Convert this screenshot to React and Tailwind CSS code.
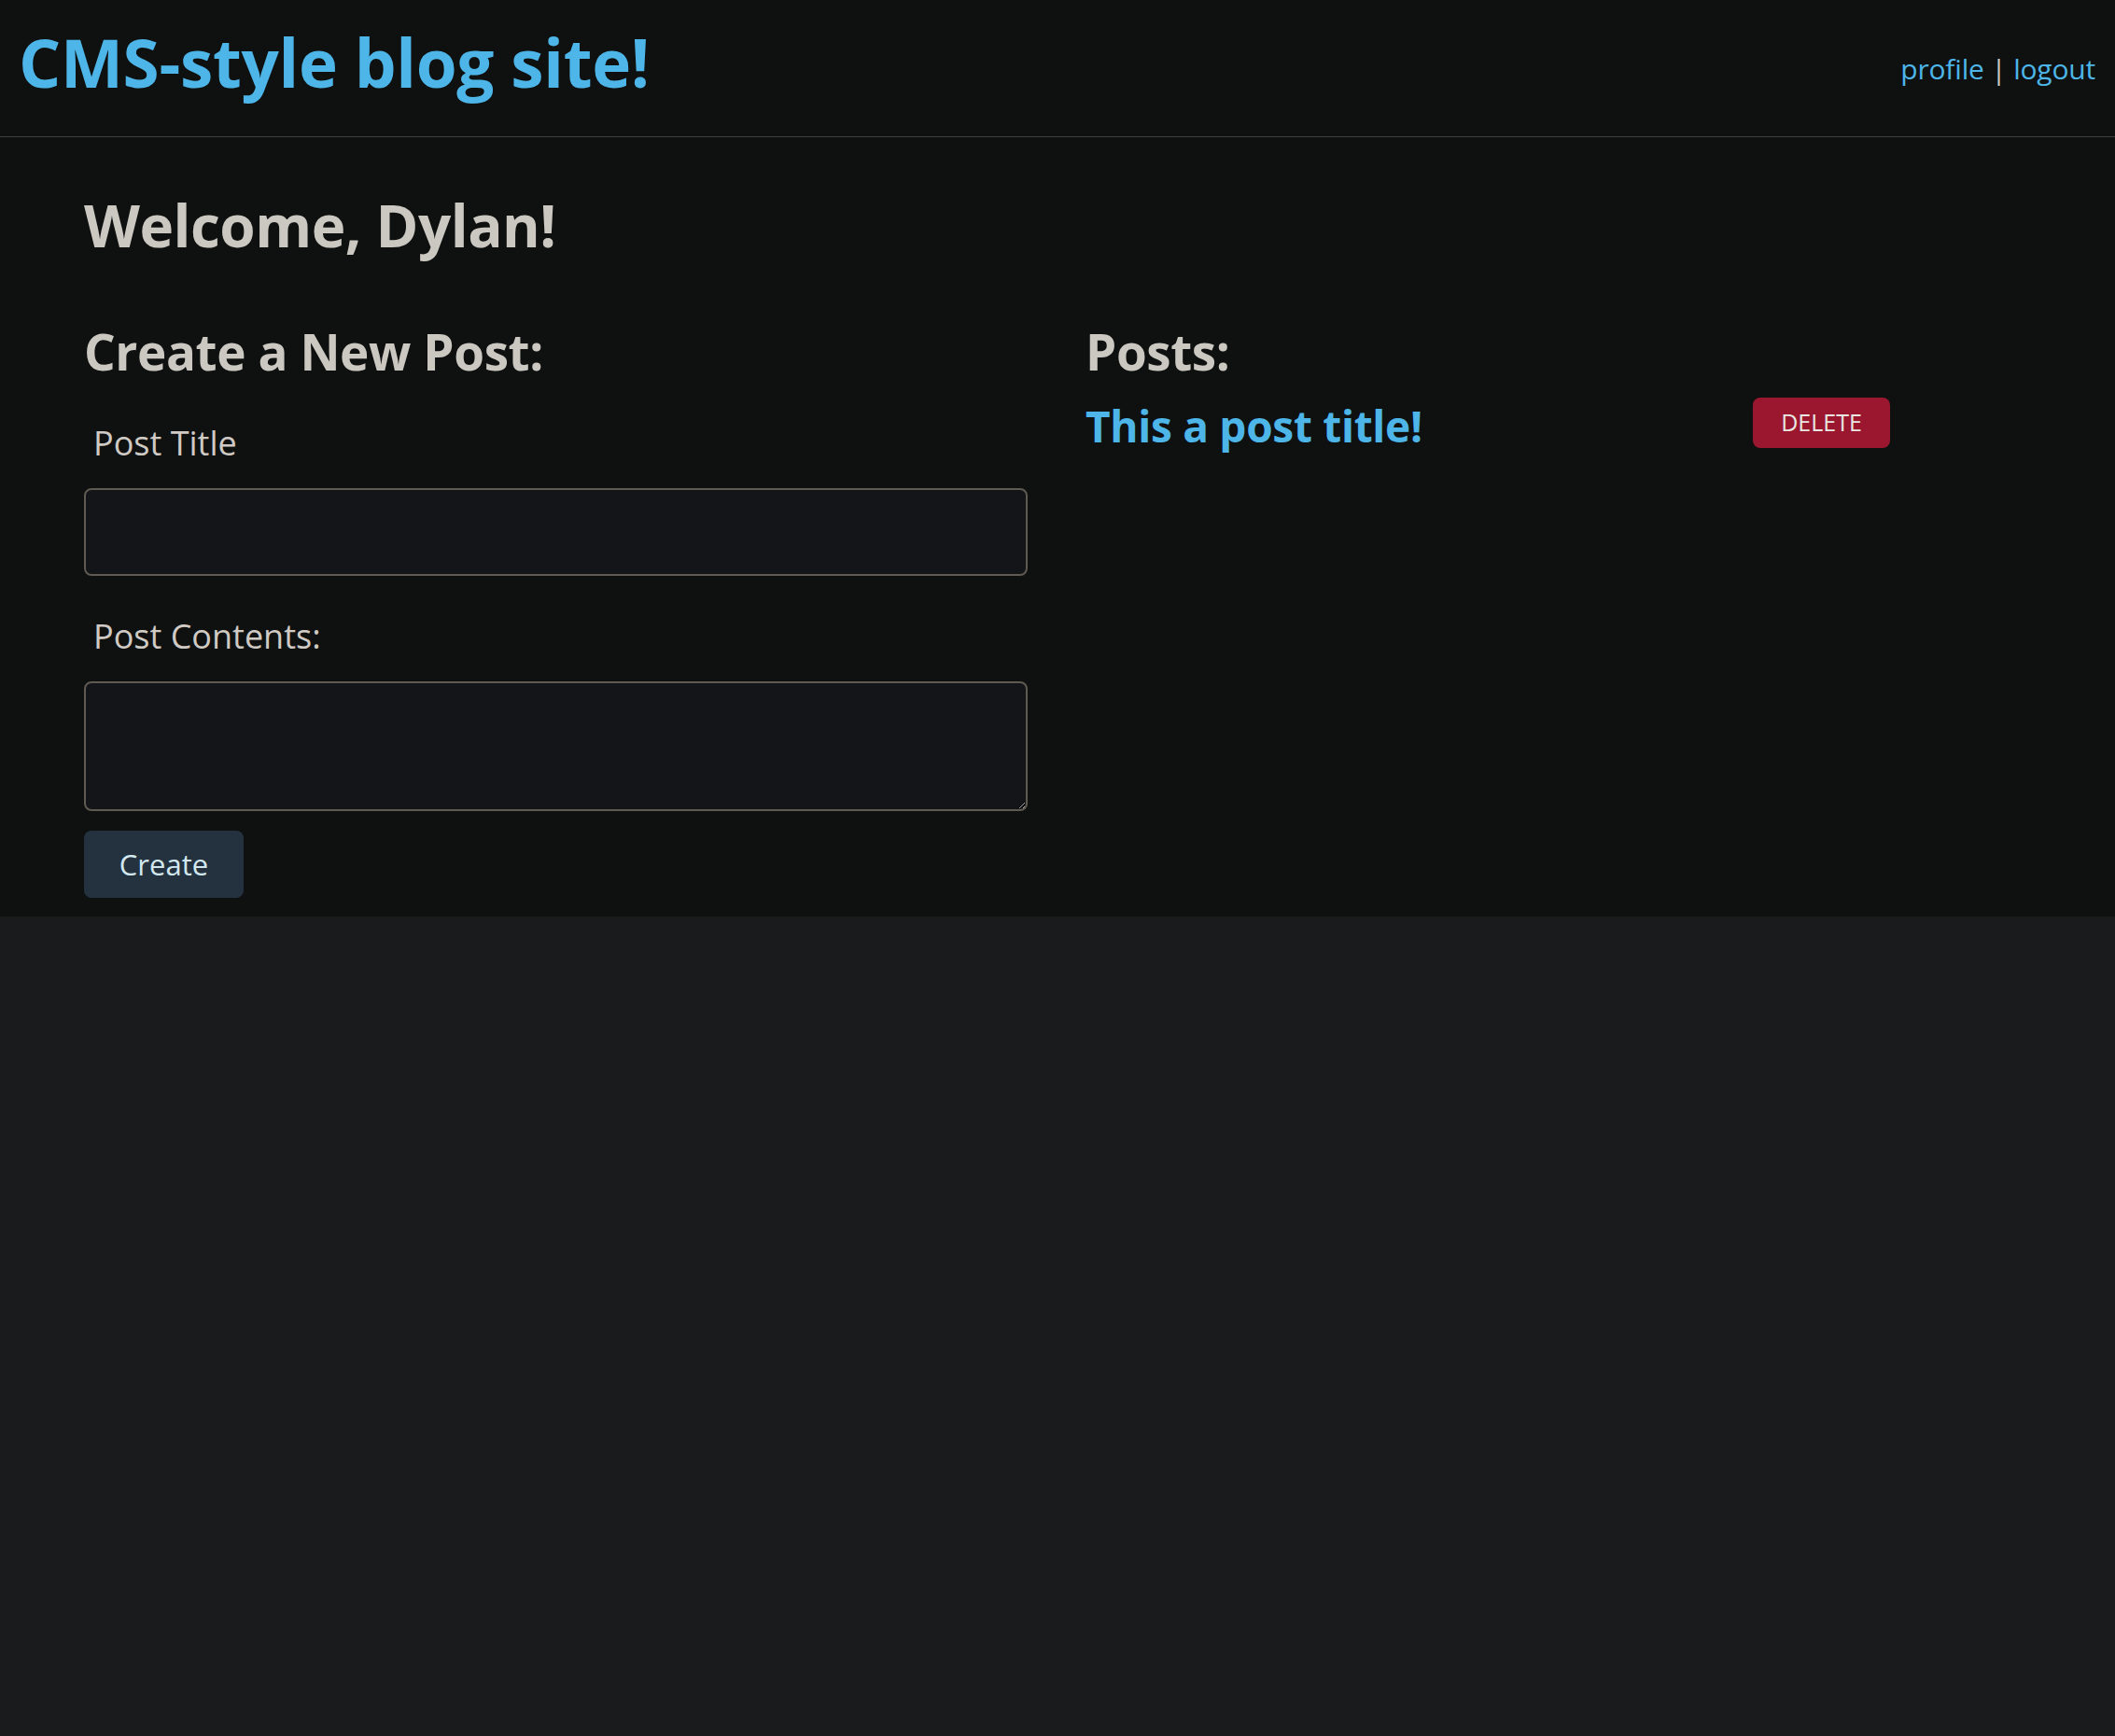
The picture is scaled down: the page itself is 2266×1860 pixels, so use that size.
const posts = [{ id: 1, title: 'This a post title!' }];

export default function App() {
  return (
    <div className="min-h-[1860px] bg-[#1a1b1d] font-['Open_Sans','Noto_Sans',sans-serif]">
      <header className="h-[147px] flex justify-between items-start border-b border-[#3c3f42] bg-[#0f1111]">
        <h1 className="pl-[20px] pt-[31px] text-[71px] leading-none font-bold tracking-[-0.3px] text-[#4db5e8]">
          <a href="#">CMS-style blog site!</a>
        </h1>
        <nav className="pr-[21px] pt-[59px] text-[30px] leading-none tracking-[-0.2px] text-[#4db5e8]">
          <a href="#">profile</a>
          <span className="text-[#cbc7c1]"> | </span>
          <a href="#">logout</a>
        </nav>
      </header>

      <main className="bg-[#0f1111] pl-[90px] pt-[63px] pb-[20px]">
        <h2 className="text-[62px] leading-none font-bold tracking-[-0.5px] text-[#cbc7c1]">Welcome, Dylan!</h2>

        <div className="mt-[78px] grid grid-cols-[1011px_862px] gap-x-[62px]">
          <form className="flex flex-col" onSubmit={(e) => e.preventDefault()}>
            <h3 className="text-[53px] leading-none font-bold tracking-[-0.4px] text-[#cbc7c1]">Create a New Post:</h3>
            <label className="mt-[54px] pl-[10px] text-[36px] leading-none text-[#cfcac4]">Post Title</label>
            <input
              type="text"
              className="mt-[30px] h-[94px] w-full rounded-lg border-2 border-[#5f5a52] bg-[#141518] px-4 text-[32px] text-[#cfcac4] outline-none"
            />
            <label className="mt-[47px] pl-[10px] text-[36px] leading-none text-[#cfcac4]">Post Contents:</label>
            <textarea className="mt-[30px] h-[139px] w-full rounded-lg border-2 border-[#5f5a52] bg-[#141518] px-4 py-2 text-[32px] text-[#cfcac4] outline-none" />
            <div className="mt-[21px]">
              <button type="submit" className="h-[72px] w-[171px] rounded-lg bg-[#243240] text-[31px] text-[#d2e8ee]">
                Create
              </button>
            </div>
          </form>

          <div className="flex flex-col">
            <h3 className="text-[53px] leading-none font-bold tracking-[-0.4px] text-[#cbc7c1]">Posts:</h3>
            {posts.map((post) => (
              <div key={post.id} className="mt-[23px] flex justify-between items-start">
                <a href="#" className="mt-[7px] text-[46px] leading-none font-bold tracking-[-0.3px] text-[#4db5e8]">
                  {post.title}
                </a>
                <button className="h-[54px] w-[147px] rounded-lg bg-[#9b172f] text-[25px] text-[#e8e6e3]">
                  DELETE
                </button>
              </div>
            ))}
          </div>
        </div>
      </main>
    </div>
  );
}
